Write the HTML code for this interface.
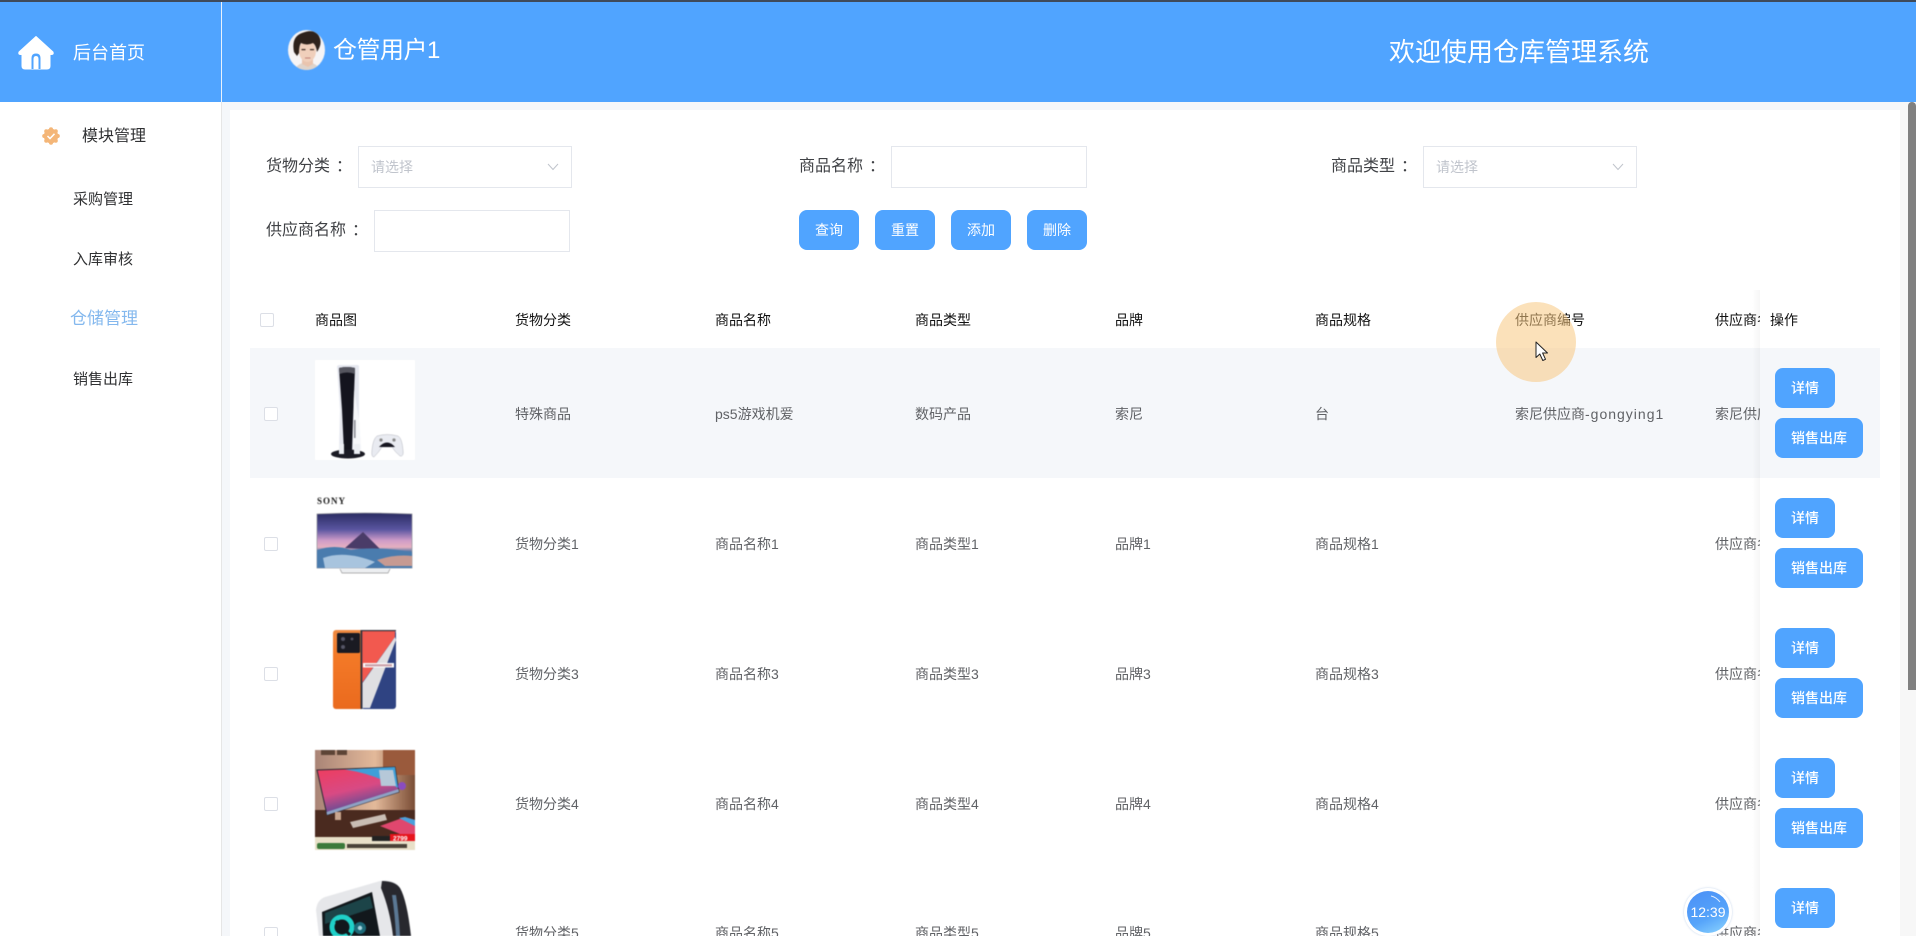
<!DOCTYPE html>
<html lang="zh-CN">
<head>
<meta charset="utf-8">
<title>仓库管理系统</title>
<style>
html,body{margin:0;padding:0;width:1916px;height:936px;overflow:hidden;background:#f5f7fa;}
body{position:relative;font-family:"Liberation Sans","Noto Sans CJK SC",sans-serif;color:#303133;}
.a{position:absolute;}
.t{position:absolute;white-space:nowrap;line-height:20px;height:20px;}
.box{position:absolute;background:#fff;border:1px solid #e4e7ed;box-sizing:border-box;}
.ph{position:absolute;white-space:nowrap;font-size:14px;line-height:20px;color:#c0c4cc;}
.lb{font-size:16px;color:#404246;}
.co{position:relative;left:6px;}
.m{font-size:15px;color:#303133;}
.btn{position:absolute;background:#50a4ff;color:#fff;border-radius:8px;text-align:center;font-size:14px;line-height:40px;height:40px;width:60px;}
.btn.w{width:88px;font-weight:500;}
.btn.d{font-weight:500;}
.h{font-size:14px;color:#111;}
.c{font-size:14px;color:#606266;}
.cb{position:absolute;width:14px;height:14px;background:#fff;border:1px solid #dcdfe6;border-radius:2px;box-sizing:border-box;}
svg{display:block;}
.img{filter:blur(.45px);}
</style>
</head>
<body>
<!-- top edge & header -->
<div class="a" style="left:0;top:0;width:1916px;height:2px;background:#3f4a5a;"></div>
<div class="a" style="left:0;top:2px;width:1916px;height:100px;background:#50a4ff;"></div>
<div class="a" style="left:221px;top:2px;width:1px;height:100px;background:#e9f2fc;"></div>

<!-- home icon -->
<svg class="a" style="left:17px;top:35px;" width="38" height="35" viewBox="0 0 38 35">
<path d="M19 1.5 L36 17 Q37 19.5 34.5 19.5 H33 V31 Q33 34 30 34 H8 Q5 34 5 31 V19.5 H3.5 Q1 19.5 2 17 Z" fill="#fff" stroke="#fff" stroke-width="1" stroke-linejoin="round"/>
<path d="M14.5 34 V23 Q14.5 18.5 19 18.5 Q23.5 18.5 23.5 23 V34 Z" fill="#50a4ff"/>
<path d="M16.5 34 V24 Q16.5 21 19 21 Q21.5 21 21.5 24 V34 Z" fill="#fff"/>
</svg>
<div class="t" style="left:73px;top:43px;font-size:18px;color:#fff;">后台首页</div>

<!-- avatar -->
<svg class="a img" style="left:288px;top:30px;" width="37" height="40" viewBox="0 0 37 40">
<defs><clipPath id="av"><ellipse cx="18.5" cy="20" rx="18.5" ry="20"/></clipPath></defs>
<g clip-path="url(#av)">
<rect width="37" height="40" fill="#f6f4f5"/>
<path d="M6 40 Q10 33 19 32 Q29 33 32 40 Z" fill="#dfd3ca"/>
<path d="M14 28 h11 v6 l-5 3 l-6 -3z" fill="#e9c4ae"/>
<ellipse cx="19.5" cy="21" rx="8.5" ry="11" fill="#f0cfbb"/>
<path d="M6 22 Q3 7 14 3 Q26 -2 31 6 Q35 13 29 22 Q28 15 25 13 Q19 16 13 13 Q11 16 11 23 L9 26 Z" fill="#2e221c"/>
<rect x="13.5" y="19" width="4" height="1.2" fill="#3a2a22"/><rect x="22" y="19" width="4" height="1.2" fill="#3a2a22"/>
<path d="M17 28 h5.5" stroke="#c08078" stroke-width="1.1"/>
</g>
</svg>
<div class="t" style="left:333px;top:41px;font-size:24px;color:#fff;letter-spacing:-.5px;">仓管用户1</div>
<div class="t" style="left:1389px;top:42px;font-size:26px;color:#fff;">欢迎使用仓库管理系统</div>

<!-- sidebar -->
<div class="a" style="left:0;top:102px;width:221px;height:834px;background:#fff;"></div>
<div class="a" style="left:221px;top:102px;width:1px;height:834px;background:#e6e6e6;"></div>
<svg class="a" style="left:42px;top:127px;" width="18" height="18" viewBox="0 0 18 18">
<g fill="#f4b678"><circle cx="9" cy="9" r="7.2"/><circle cx="9" cy="2.2" r="2"/><circle cx="9" cy="15.8" r="2"/><circle cx="2.2" cy="9" r="2"/><circle cx="15.8" cy="9" r="2"/><circle cx="4.2" cy="4.2" r="2"/><circle cx="13.8" cy="4.2" r="2"/><circle cx="4.2" cy="13.8" r="2"/><circle cx="13.8" cy="13.8" r="2"/></g>
<path d="M5.5 9 L8 11.5 L12.5 6.8" fill="none" stroke="#fff" stroke-width="1.5"/>
</svg>
<div class="t" style="left:82px;top:127px;font-size:16px;color:#303133;">模块管理</div>
<div class="t m" style="left:73px;top:190px;">采购管理</div>
<div class="t m" style="left:73px;top:250px;">入库审核</div>
<div class="t" style="left:70px;top:309px;font-size:17px;color:#84b8ee;">仓储管理</div>
<div class="t m" style="left:73px;top:370px;">销售出库</div>

<!-- main background & card -->
<div class="a" style="left:230px;top:110px;width:1670px;height:826px;background:#fff;"></div>
<div class="a" style="left:1900px;top:102px;width:16px;height:834px;background:#f7f7f7;"></div>
<div class="a" style="left:1908px;top:102px;width:8px;height:588px;background:#808080;border-radius:4px 4px 0 0;"></div>

<!-- form -->
<div class="t lb" style="left:266px;top:157px;">货物分类<span class="co">：</span></div>
<div class="box" style="left:358px;top:146px;width:214px;height:42px;"></div>
<div class="ph" style="left:371px;top:157px;">请选择</div>
<svg class="a" style="left:547px;top:163px;" width="12" height="8" viewBox="0 0 12 8"><path d="M1 1 L6 6.5 L11 1" fill="none" stroke="#c0c4cc" stroke-width="1"/></svg>

<div class="t lb" style="left:799px;top:157px;">商品名称<span class="co">：</span></div>
<div class="box" style="left:891px;top:146px;width:196px;height:42px;"></div>

<div class="t lb" style="left:1331px;top:157px;">商品类型<span class="co">：</span></div>
<div class="box" style="left:1423px;top:146px;width:214px;height:42px;"></div>
<div class="ph" style="left:1436px;top:157px;">请选择</div>
<svg class="a" style="left:1612px;top:163px;" width="12" height="8" viewBox="0 0 12 8"><path d="M1 1 L6 6.5 L11 1" fill="none" stroke="#c0c4cc" stroke-width="1"/></svg>

<div class="t lb" style="left:266px;top:221px;">供应商名称<span class="co">：</span></div>
<div class="box" style="left:374px;top:210px;width:196px;height:42px;"></div>

<div class="btn" style="left:799px;top:210px;">查询</div>
<div class="btn" style="left:875px;top:210px;">重置</div>
<div class="btn" style="left:951px;top:210px;">添加</div>
<div class="btn" style="left:1027px;top:210px;">删除</div>

<!-- table header -->
<div class="cb" style="left:260px;top:313px;"></div>
<div class="t h" style="left:315px;top:310px;">商品图</div>
<div class="t h" style="left:515px;top:310px;">货物分类</div>
<div class="t h" style="left:715px;top:310px;">商品名称</div>
<div class="t h" style="left:915px;top:310px;">商品类型</div>
<div class="t h" style="left:1115px;top:310px;">品牌</div>
<div class="t h" style="left:1315px;top:310px;">商品规格</div>
<div class="t h" style="left:1515px;top:310px;">供应商编号</div>
<div class="t h" style="left:1715px;top:310px;">供应商名称</div>

<!-- row 1 -->
<div class="a" style="left:250px;top:348px;width:1630px;height:130px;background:#f5f7fa;"></div>
<div class="cb" style="left:264px;top:407px;"></div>
<svg class="a img" style="left:315px;top:360px;" width="100" height="100" viewBox="0 0 100 100">
<rect width="100" height="100" fill="#fff"/>
<path d="M22 6 L24 5 L43 5 L44 6 L44 60 L46 90 L24 90 L25 50 Z" fill="#e6e8f0"/>
<path d="M24 8 Q32 6 40 8 L38 60 L37 92 H29 L27 50 Z" fill="#14141e"/>
<path d="M24 8 Q32 6 40 8 L40 14 Q32 11 24.5 14 Z" fill="#55555f"/>
<path d="M39 30 L44 60 L46 90 L38 90 Z" fill="#f6f7fa"/>
<rect x="39" y="60" width="1.6" height="18" fill="#8a8c95"/>
<ellipse cx="33" cy="94" rx="17" ry="4.5" fill="#1b1b24"/>
<rect x="24" y="84" width="5" height="10" fill="#eceef3"/>
<rect x="39" y="84" width="6" height="10" fill="#eceef3"/>
<path d="M62 76 Q72 73 83 76 Q87 78 88 90 Q89 97 85 96 Q80 92 77 87 H67 Q64 92 59 97 Q56 97 57 90 Q58 79 62 76 Z" fill="#e9ebf1" stroke="#b8bac2" stroke-width=".5"/>
<path d="M64 87 Q72 78 80 87 Z" fill="#15151f"/>
<circle cx="66" cy="80" r="1.6" fill="#888"/><circle cx="79" cy="80" r="1.6" fill="#888"/>
</svg>
<div class="t c" style="left:515px;top:404px;">特殊商品</div>
<div class="t c" style="left:715px;top:404px;">ps5游戏机爱</div>
<div class="t c" style="left:915px;top:404px;">数码产品</div>
<div class="t c" style="left:1115px;top:404px;">索尼</div>
<div class="t c" style="left:1315px;top:404px;">台</div>
<div class="t c" style="left:1515px;top:404px;">索尼供应商<span style="letter-spacing:1px;">-gongying1</span></div>
<div class="t c" style="left:1715px;top:404px;">索尼供应商</div>

<!-- row 2 -->
<div class="cb" style="left:264px;top:537px;"></div>
<svg class="a img" style="left:315px;top:490px;" width="100" height="100" viewBox="0 0 100 100">
<defs><linearGradient id="sky" x1="0" y1="0" x2="0" y2="1"><stop offset="0" stop-color="#2a2c62"/><stop offset=".3" stop-color="#5a55a0"/><stop offset=".5" stop-color="#cf9cc8"/><stop offset=".62" stop-color="#e6b0c0"/><stop offset=".72" stop-color="#35699f"/><stop offset="1" stop-color="#b4cbe0"/></linearGradient></defs>
<rect width="100" height="100" fill="#fff"/>
<text x="2" y="14" font-family="Liberation Serif,serif" font-weight="700" font-size="9" letter-spacing="1" fill="#1a1a1a">SONY</text>
<path d="M2 24 Q50 22 97 24 V78 H2 Z" fill="url(#sky)" stroke="#8f8f98" stroke-width=".7"/>
<path d="M30 58 L48 42 L66 60 Z" fill="#4a3c68"/>
<path d="M2 60 Q20 54 36 60 Q60 56 97 62 V78 H2 Z" fill="#4a7cae"/>
<path d="M8 68 Q30 60 60 72 L50 78 H10 Z" fill="#a8c4de"/>
<path d="M62 70 Q80 64 97 66 V76 H70 Z" fill="#c69a92"/>
<path d="M25 79 L27 83 H73 L75 79" fill="#eceef1" stroke="#999" stroke-width=".7"/>
</svg>
<div class="t c" style="left:515px;top:534px;">货物分类1</div>
<div class="t c" style="left:715px;top:534px;">商品名称1</div>
<div class="t c" style="left:915px;top:534px;">商品类型1</div>
<div class="t c" style="left:1115px;top:534px;">品牌1</div>
<div class="t c" style="left:1315px;top:534px;">商品规格1</div>
<div class="t c" style="left:1715px;top:534px;">供应商名称1</div>

<!-- row 3 -->
<div class="cb" style="left:264px;top:667px;"></div>
<svg class="a img" style="left:315px;top:620px;" width="100" height="100" viewBox="0 0 100 100">
<defs><linearGradient id="or" x1="0" y1="0" x2="0" y2="1"><stop offset="0" stop-color="#ee8a42"/><stop offset=".3" stop-color="#f47a28"/><stop offset="1" stop-color="#ea6a1e"/></linearGradient></defs>
<rect x="18" y="10" width="30" height="79" rx="3" fill="url(#or)"/>
<rect x="22" y="13" width="23" height="20" rx="1.5" fill="#1a1a22"/>
<circle cx="28" cy="19" r="2" fill="#556"/><circle cx="28" cy="27" r="2" fill="#556"/><circle cx="37" cy="19" r="1.4" fill="#556"/>
<rect x="46" y="10" width="35" height="79" rx="3" fill="#2f4382"/>
<path d="M47 11 H80 V17 L47 63 Z" fill="#f2594f"/>
<path d="M80 17 L81 20 L55 88 H47.5 V63 Z" fill="#dfdfe2"/>
<rect x="48" y="43" width="31" height="4.5" fill="#fdfdfd"/>
<rect x="50" y="44.2" width="27" height="2.2" fill="#c9a0a8"/>
<rect x="45.5" y="10" width="1.8" height="79" fill="#33333c"/>
<rect x="46" y="10" width="35" height="1.2" fill="#33333c"/>
</svg>
<div class="t c" style="left:515px;top:664px;">货物分类3</div>
<div class="t c" style="left:715px;top:664px;">商品名称3</div>
<div class="t c" style="left:915px;top:664px;">商品类型3</div>
<div class="t c" style="left:1115px;top:664px;">品牌3</div>
<div class="t c" style="left:1315px;top:664px;">商品规格3</div>
<div class="t c" style="left:1715px;top:664px;">供应商名称3</div>

<!-- row 4 -->
<div class="cb" style="left:264px;top:797px;"></div>
<svg class="a img" style="left:315px;top:750px;" width="100" height="100" viewBox="0 0 100 100">
<defs><linearGradient id="wall" x1="0" y1="0" x2="1" y2="0"><stop offset="0" stop-color="#a98476"/><stop offset=".6" stop-color="#e3b99a"/><stop offset="1" stop-color="#7a4d35"/></linearGradient>
<linearGradient id="scr" x1="0" y1="0" x2=".4" y2="1"><stop offset="0" stop-color="#f03c5c"/><stop offset=".55" stop-color="#d84a84"/><stop offset="1" stop-color="#3f4d9a"/></linearGradient></defs>
<rect width="100" height="100" fill="url(#wall)"/>
<rect x="6" y="0" width="14" height="5" fill="#5d4436"/><rect x="22" y="0" width="10" height="5" fill="#5d4436"/>
<rect x="68" y="0" width="32" height="25" fill="#9a5a3c"/>
<rect y="60" width="100" height="28" fill="#4a2a1f"/>
<path d="M2 20 L80 17 L84 42 L12 65 Z" fill="url(#scr)" stroke="#2a2a33" stroke-width="1"/>
<path d="M30 19.5 L80 17 L83 38 Q60 24 30 19.5 Z" fill="#3f9fd8"/>
<path d="M64 20 H78 L81 36 H66 Z" fill="#b6c8d8"/>
<path d="M12 65 L84 42 L83.5 39 L11.5 62 Z" fill="#8ea2c4"/>
<circle cx="87" cy="36" r="4" fill="#8a4cc0"/>
<path d="M35 72 L70 64 L72 70 L38 78 Z" fill="#c9bdb4"/>
<path d="M65 76 L90 67 L100 70 V84 H85 Z" fill="#e0476e"/>
<path d="M84 68 L90 67 L100 70 V76 Z" fill="#4aa0dc"/>
<rect x="20" y="62" width="6" height="8" fill="#c9a58e"/>
<rect y="87" width="100" height="13" fill="#e8e0c8"/>
<rect x="75" y="84" width="25" height="7" fill="#e7141c"/>
<text x="78" y="90.5" font-family="Liberation Sans,sans-serif" font-weight="700" font-size="6.5" fill="#fff">2799</text>
<rect x="57" y="86" width="18" height="5" fill="#222"/>
<rect x="2" y="93" width="28" height="6" rx="2" fill="#3a7a3a"/>
<rect x="32" y="94" width="60" height="4" fill="#4a4338"/>
</svg>
<div class="t c" style="left:515px;top:794px;">货物分类4</div>
<div class="t c" style="left:715px;top:794px;">商品名称4</div>
<div class="t c" style="left:915px;top:794px;">商品类型4</div>
<div class="t c" style="left:1115px;top:794px;">品牌4</div>
<div class="t c" style="left:1315px;top:794px;">商品规格4</div>
<div class="t c" style="left:1715px;top:794px;">供应商名称4</div>

<!-- row 5 -->
<div class="cb" style="left:264px;top:927px;"></div>
<svg class="a img" style="left:315px;top:880px;" width="100" height="56" viewBox="0 0 100 56">
<path d="M1 30 Q2 20 10 17 L65 1 Q75 -1 82 4 Q90 12 96 56 H4 Z" fill="#e6e7ea"/>
<path d="M7 32 L57 12 L65 56 H8 Z" fill="#12181c"/>
<path d="M10 33 L55 16 L58 28 L10 44 Z" fill="#1c4448"/>
<path d="M67 1 Q80 1 85 8 Q92 20 96 56 H78 Q75 30 66 8 Z" fill="#28282e"/>
<path d="M77 15 L81 15 Q84 35 85 56 H81 Q80 35 77 15 Z" fill="#5b7894"/>
<circle cx="27" cy="47" r="10" fill="none" stroke="#1fd0c8" stroke-width="5"/>
<path d="M21 41 L35 55" stroke="#12181c" stroke-width="3"/>
<circle cx="45" cy="48" r="6" fill="#1d6a78"/>
<circle cx="45" cy="48" r="2.2" fill="#a6d6e0"/>
</svg>
<div class="t c" style="left:515px;top:923px;">货物分类5</div>
<div class="t c" style="left:715px;top:923px;">商品名称5</div>
<div class="t c" style="left:915px;top:923px;">商品类型5</div>
<div class="t c" style="left:1115px;top:923px;">品牌5</div>
<div class="t c" style="left:1315px;top:923px;">商品规格5</div>
<div class="t c" style="left:1715px;top:923px;">供应商名称5</div>

<!-- fixed column -->
<div class="a" style="left:1752px;top:290px;width:8px;height:646px;background:linear-gradient(to right,rgba(0,0,0,0),rgba(0,0,0,.035));"></div>
<div class="a" style="left:1760px;top:290px;width:120px;height:646px;background:#fff;"></div>
<div class="a" style="left:1760px;top:348px;width:120px;height:130px;background:#f5f7fa;"></div>
<div class="t h" style="left:1770px;top:310px;">操作</div>
<div class="btn d" style="left:1775px;top:368px;">详情</div>
<div class="btn w" style="left:1775px;top:418px;">销售出库</div>
<div class="btn d" style="left:1775px;top:498px;">详情</div>
<div class="btn w" style="left:1775px;top:548px;">销售出库</div>
<div class="btn d" style="left:1775px;top:628px;">详情</div>
<div class="btn w" style="left:1775px;top:678px;">销售出库</div>
<div class="btn d" style="left:1775px;top:758px;">详情</div>
<div class="btn w" style="left:1775px;top:808px;">销售出库</div>
<div class="btn d" style="left:1775px;top:888px;">详情</div>

<!-- cursor highlight -->
<div class="a" style="left:1496px;top:302px;width:80px;height:80px;border-radius:50%;background:rgba(248,200,130,.55);"></div>
<svg class="a" style="left:1535px;top:341px;" width="14" height="21" viewBox="0 0 14 21">
<path d="M1 1 V16.5 L4.8 13 L7.8 19.5 L10.5 18.3 L7.6 12 H12.5 Z" fill="#fff" stroke="#222" stroke-width="1" stroke-linejoin="round"/>
</svg>

<!-- clock -->
<div class="a" style="left:1684px;top:888px;width:48px;height:48px;border-radius:50%;background:#fff;box-shadow:0 0 2px rgba(180,200,230,.8);"></div>
<div class="a" style="left:1687px;top:891px;width:42px;height:42px;border-radius:50%;background:linear-gradient(155deg,#4a8ff6 0%,#56a4fa 60%,#8ed6ff 100%);overflow:hidden;text-align:center;color:#fff;font-size:14px;line-height:42px;">12:39</div>
<svg class="a" style="left:1710px;top:895px;" width="12" height="10" viewBox="0 0 12 10"><path d="M1 1 Q6 2 10 7" fill="none" stroke="#dcebff" stroke-width="1"/></svg>
</body>
</html>
